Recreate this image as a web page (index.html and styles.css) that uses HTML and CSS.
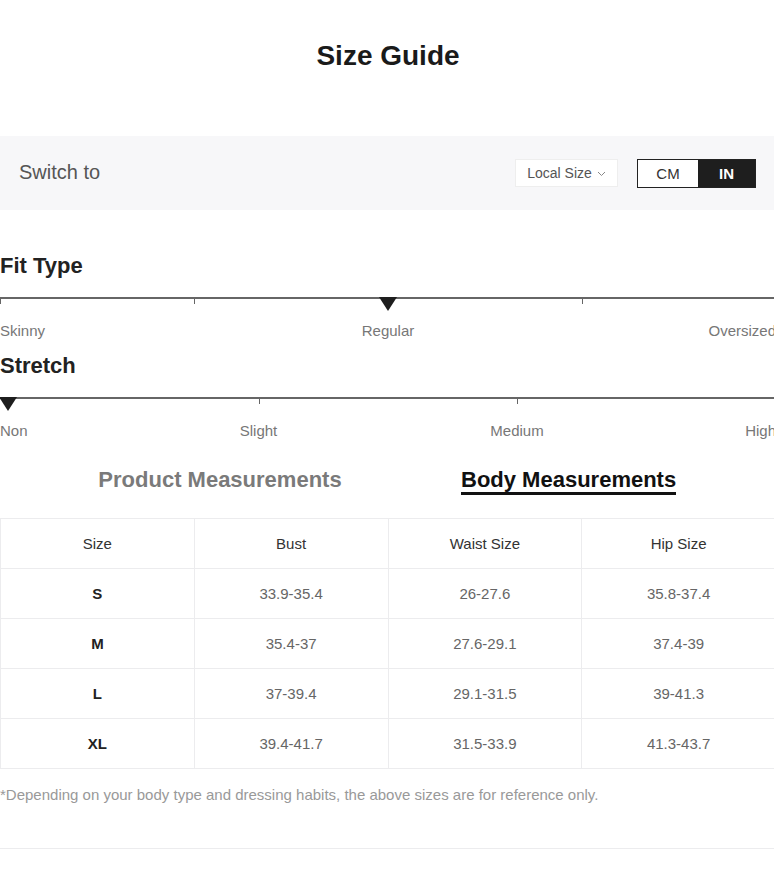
FILE: index.html
```html
<!DOCTYPE html>
<html>
<head>
<meta charset="utf-8">
<link rel="stylesheet" href="styles.css">
</head>
<body>
<div class="page">
  <h1 class="title">Size Guide</h1>

  <div class="switch-bar">
    <span class="switch-label">Switch to</span>
    <div class="switch-controls">
      <div class="local-size">Local Size
        <svg class="chev" width="9" height="6" viewBox="0 0 9 6"><path d="M1 1 L4.5 4.5 L8 1" fill="none" stroke="#888" stroke-width="1"/></svg>
      </div>
      <div class="unit-toggle">
        <span class="unit">CM</span>
        <span class="unit active">IN</span>
      </div>
    </div>
  </div>

  <section class="scale first">
    <h2 class="scale-title">Fit Type</h2>
    <div class="track">
      <span class="tick t0"></span>
      <span class="tick t1"></span>
      <span class="marker m2"></span>
      <span class="tick t3"></span>
      <span class="tick t4"></span>
    </div>
    <div class="labels three">
      <span class="lab-left">Skinny</span>
      <span class="lab-c">Regular</span>
      <span class="lab-right">Oversized</span>
    </div>
  </section>

  <section class="scale second">
    <h2 class="scale-title">Stretch</h2>
    <div class="track">
      <span class="marker m0"></span>
      <span class="tick s1"></span>
      <span class="tick s2"></span>
      <span class="tick s3"></span>
    </div>
    <div class="labels four">
      <span class="lab-left">Non</span>
      <span class="lab-c">Slight</span>
      <span class="lab-c">Medium</span>
      <span class="lab-right">High</span>
    </div>
  </section>

  <div class="tabs">
    <div class="tab-slot"><span class="tab">Product Measurements</span></div>
    <div class="tab-slot"><span class="tab active">Body Measurements</span></div>
  </div>

  <table class="size-table">
    <thead>
      <tr><th>Size</th><th>Bust</th><th>Waist Size</th><th>Hip Size</th></tr>
    </thead>
    <tbody>
      <tr><td class="sz">S</td><td>33.9-35.4</td><td>26-27.6</td><td>35.8-37.4</td></tr>
      <tr><td class="sz">M</td><td>35.4-37</td><td>27.6-29.1</td><td>37.4-39</td></tr>
      <tr><td class="sz">L</td><td>37-39.4</td><td>29.1-31.5</td><td>39-41.3</td></tr>
      <tr><td class="sz">XL</td><td>39.4-41.7</td><td>31.5-33.9</td><td>41.3-43.7</td></tr>
    </tbody>
  </table>

  <p class="note">*Depending on your body type and dressing habits, the above sizes are for reference only.</p>

  <div class="bottom-rule"></div>
</div>
</body>
</html>
```

FILE: styles.css
```css
html, body {
  margin: 0;
  padding: 0;
  overflow-x: hidden;
  background: #fff;
}
body {
  font-family: "Liberation Sans", Arial, sans-serif;
  color: #222;
}
.page {
  width: 776px;
}
.title {
  font-size: 28px;
  font-weight: bold;
  text-align: center;
  margin: 0;
  padding-top: 40px;
  height: 136px;
  box-sizing: border-box;
  line-height: 32px;
  color: #1a1a1a;
}
.switch-bar {
  height: 74px;
  background: #f7f7f9;
  display: flex;
  align-items: center;
  justify-content: space-between;
  padding: 0 20px 0 19px;
  box-sizing: border-box;
  width: 776px;
}
.switch-label {
  font-size: 20px;
  color: #555;
  margin-top: -2px;
}
.switch-controls {
  display: flex;
  align-items: center;
  gap: 19px;
}
.local-size {
  background: #fff;
  height: 28px;
  width: 103px;
  box-sizing: border-box;
  border: 1px solid #eee;
  font-size: 14px;
  color: #555;
  display: flex;
  align-items: center;
  justify-content: center;
  gap: 5px;
}
.chev { margin-top: 1px; }
.unit-toggle {
  display: flex;
  border: 1px solid #222;
  height: 29px;
  box-sizing: border-box;
}
.unit {
  width: 60px;
  display: flex;
  align-items: center;
  justify-content: center;
  font-size: 15px;
  color: #333;
  background: #fff;
}
.unit.active {
  width: 57px;
  background: #1e1e1e;
  color: #fff;
  font-weight: bold;
}
.scale-title {
  font-size: 22px;
  font-weight: bold;
  margin: 0;
  color: #222;
  line-height: 26px;
}
.scale.first {
  padding-top: 43px;
}
.scale.second {
  padding-top: 13px;
}
.track {
  position: relative;
  height: 2px;
  background: #666;
  margin-top: 18px;
  width: 776px;
}
.tick {
  position: absolute;
  top: 0;
  width: 1px;
  height: 7px;
  background: #666;
}
.t0 { left: 0; }
.t1 { left: 194px; }
.t3 { left: 582px; }
.t4 { left: 775px; }
.s1 { left: 259px; }
.s2 { left: 517px; }
.s3 { left: 775px; }
.marker {
  position: absolute;
  top: 0;
  width: 0;
  height: 0;
  border-left: 9px solid transparent;
  border-right: 9px solid transparent;
  border-top: 14px solid #1e1e1e;
}
.m2 { left: 379px; }
.m0 { left: -1px; }
.labels {
  display: grid;
  font-size: 15px;
  color: #777;
  margin-top: 23px;
  line-height: 18px;
  width: 776px;
  white-space: nowrap;
}
.labels.three {
  grid-template-columns: 194px 388px 194px;
}
.labels.four {
  grid-template-columns: 129px 259px 258px 130px;
}
.lab-left { text-align: left; }
.lab-c { text-align: center; }
.lab-right { text-align: right; }
.tabs {
  display: grid;
  grid-template-columns: 440px 336px;
  margin-top: 28px;
  width: 776px;
  height: 50px;
}
.tab-slot {
  display: flex;
  justify-content: center;
  align-items: flex-start;
}
.tab-slot:last-child {
  justify-content: flex-start;
  padding-left: 21px;
}
.tab {
  font-size: 22px;
  font-weight: bold;
  color: #7a7a7a;
  line-height: 24px;
  white-space: nowrap;
}
.tab.active {
  color: #111;
  border-bottom: 3px solid #111;
}
.size-table {
  width: 776px;
  border-collapse: collapse;
  table-layout: fixed;
}
.size-table th,
.size-table td {
  border: 1px solid #ececee;
  height: 49px;
  text-align: center;
  font-size: 15px;
  padding: 0;
}
.size-table th {
  font-weight: normal;
  color: #333;
}
.size-table td {
  color: #666;
}
.size-table td.sz {
  color: #222;
  font-weight: bold;
}
.note {
  margin: 16px 0 0 0;
  font-size: 15px;
  color: #999;
  line-height: 20px;
}
.bottom-rule {
  margin-top: 43px;
  height: 1px;
  background: #ececee;
  width: 776px;
}
```
